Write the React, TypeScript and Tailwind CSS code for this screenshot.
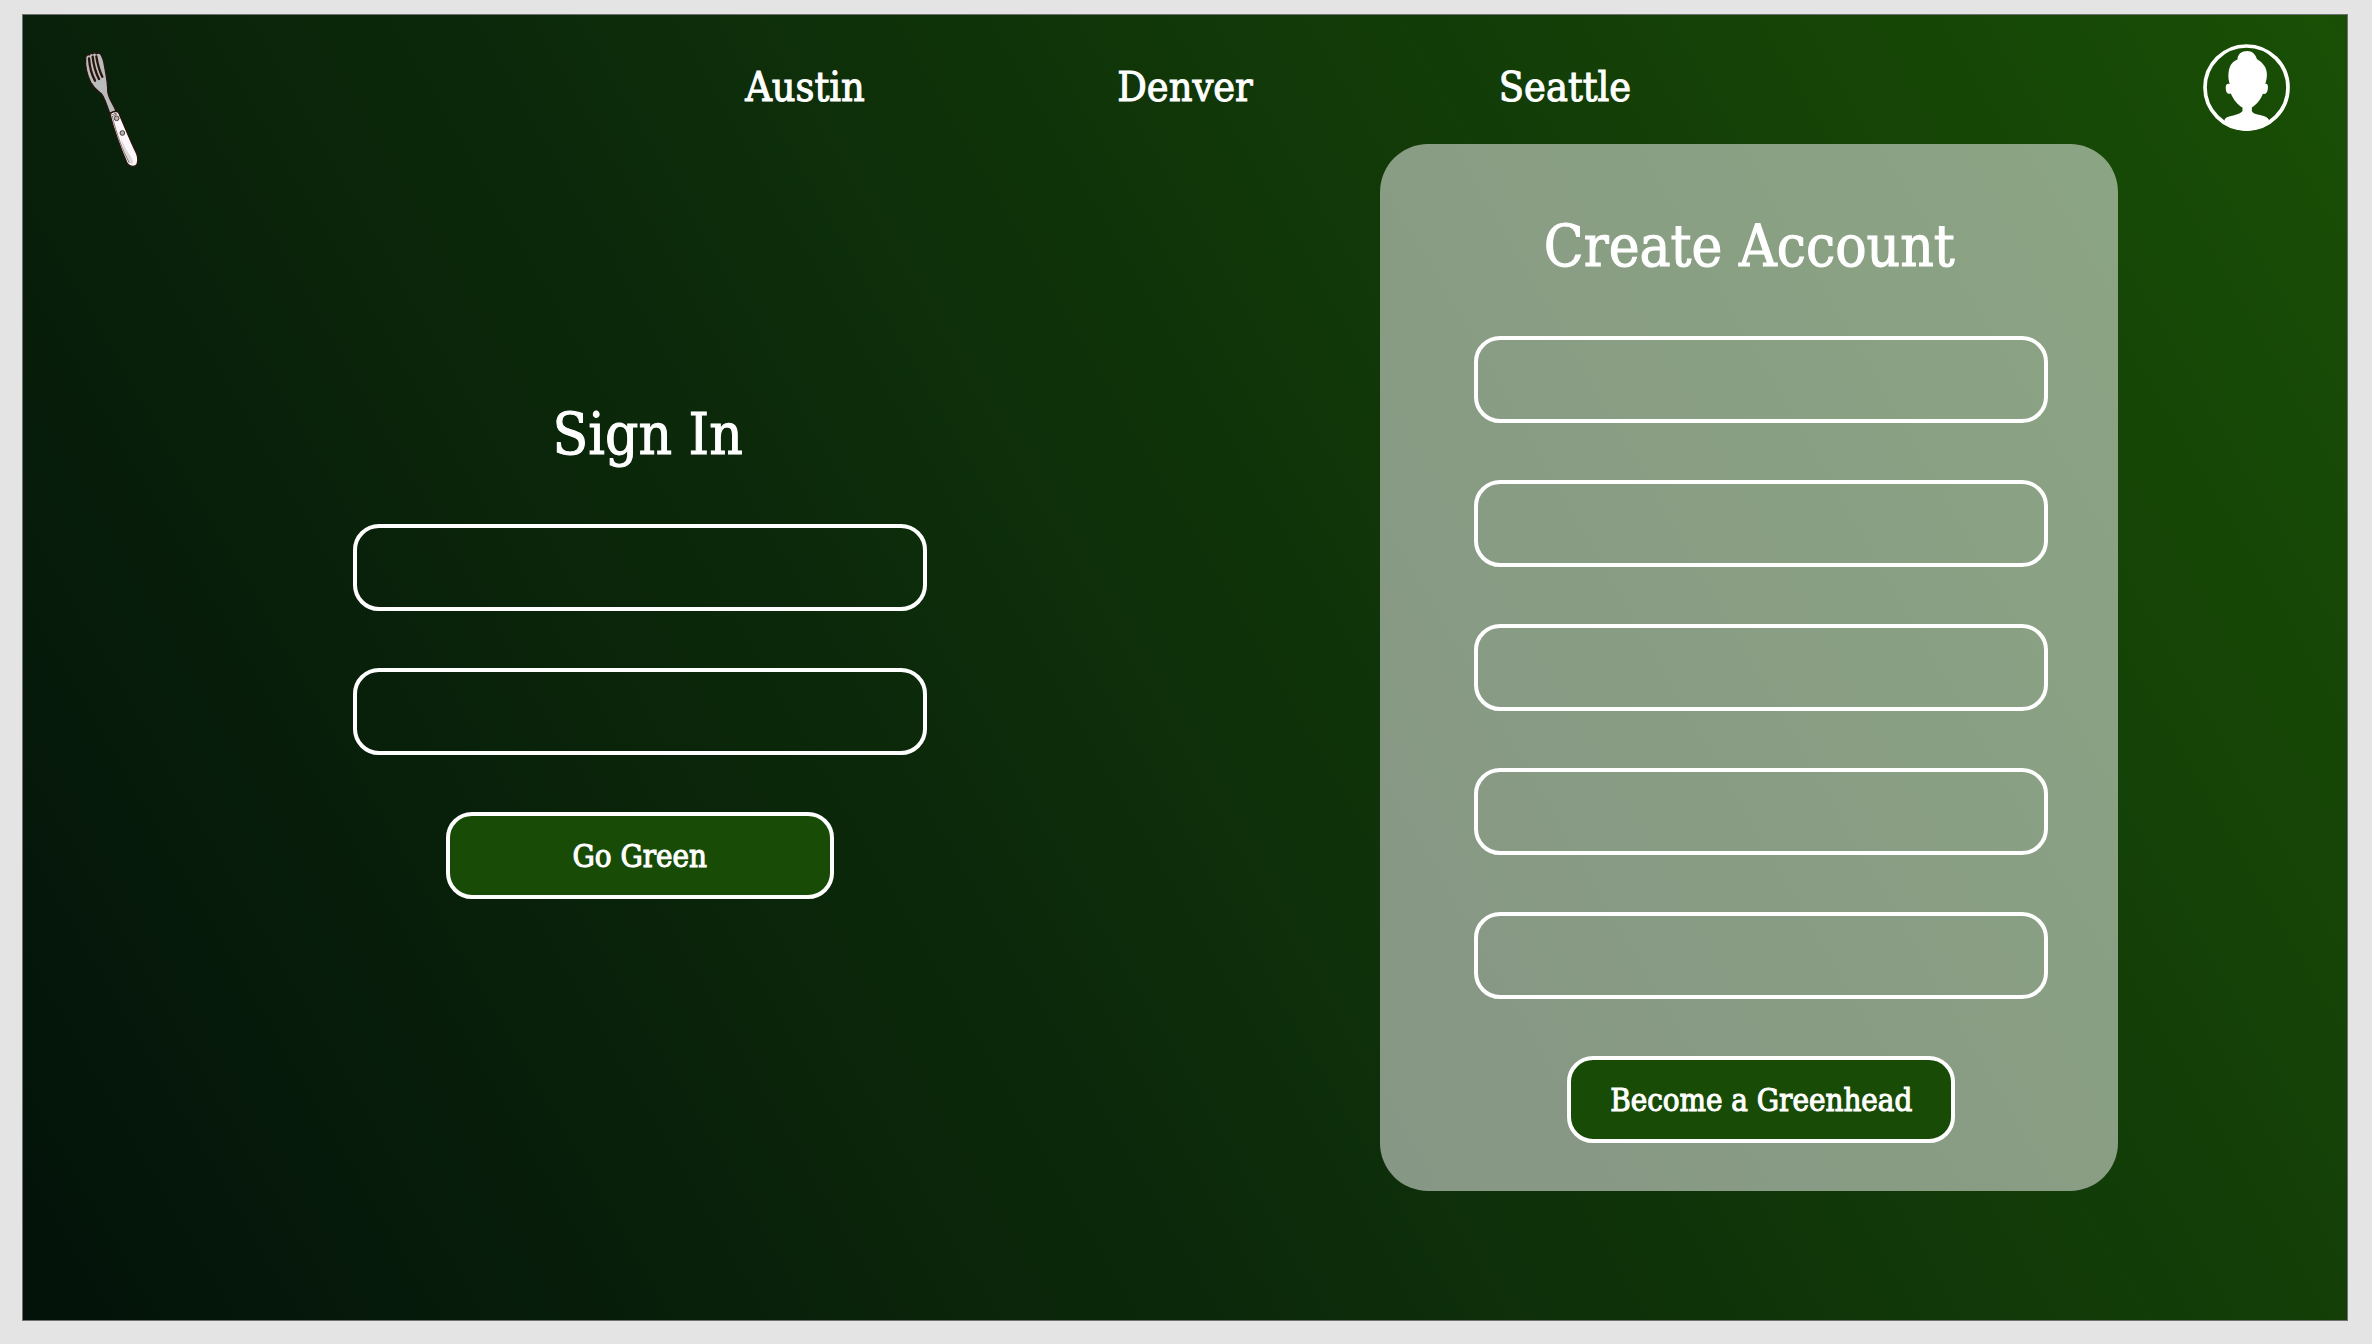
function ForkLogo() {
  return (
    <svg viewBox="0 0 240 405" className="h-[135px] w-20" role="img" aria-label="Fork logo">
      <g stroke="#2a150c" strokeWidth="4" strokeLinejoin="round" strokeLinecap="round">
        <path
          fill="#b9bcbd"
          d="M47 52C45 75 52 106 62 127C72 146 84 153 94 161C103 172 107 184 119 220L138 213C129 190 115 176 113 152C114 128 107 98 101 64C97 50 92 39 86 39C82 39 80 40 79 42C76 37 70 37 68 42C66 39 61 39 58 45C53 43 48 46 47 52Z"
        />
        <path fill="none" strokeWidth="7" d="M57 55C59 82 65 104 75 122M68 50C71 78 78 100 87 117M79 49C83 74 90 96 97 110" />
        <path
          fill="#fdf7fb"
          d="M120 223C124 215 139 211 146 218C162 255 181 302 200 341C206 355 204 373 197 377C188 381 179 379 172 371C154 330 135 282 120 223Z"
        />
      </g>
      <path fill="#dcd8d5" d="M151 290C160 313 172 335 183 350C188 358 192 369 187 372C180 372 175 366 172 358C165 338 156 315 151 290Z" />
      <g fill="none" stroke="#4a3b36" strokeWidth="2">
        <path d="M127 229C139 280 158 331 178 369" />
        <path d="M122 226L141 219M134 216L137 224M124 231L142 223" />
      </g>
      <g fill="#b5b1ac" stroke="#4a4039" strokeWidth="3">
        <circle cx="140" cy="235" r="7" />
        <circle cx="157" cy="279" r="7" />
      </g>
    </svg>
  );
}

function AvatarIcon() {
  return (
    <svg viewBox="160 131 260 260" className="size-[87px]" aria-hidden="true">
      <circle cx="290" cy="261" r="124" fill="none" stroke="#fff" strokeWidth="11" />
      <path
        fill="#fff"
        d="M263 177C264 160 276 152 292 152C307 152 317 162 321 176C338 187 350 199 351 221C351 233 349 242 346 251C351 248 355 253 354 263C353 275 348 282 339 280C333 296 321 312 306 321V331C311 346 350 339 358 359C338 381 315 391 291 391C266 391 243 380 224 361C224 342 266 348 278 331V321C263 313 251 297 243 279C233 283 228 273 228 263C227 253 232 248 240 251C237 242 235 231 236 221C237 200 245 183 263 177Z"
      />
    </svg>
  );
}

function Field({ label, type = "text" }: { label: string; type?: string }) {
  return (
    <input
      type={type}
      aria-label={label}
      className="block h-[87px] w-full rounded-[26px] border-4 border-white bg-transparent px-6 text-3xl text-white outline-none focus:bg-white/10"
    />
  );
}

function SubmitButton({ children }: { children: string }) {
  return (
    <button
      type="submit"
      className="h-[87px] w-[388px] rounded-[26px] border-4 border-white bg-[#184b06] pt-0.5 text-[31px] text-white"
    >
      {children}
    </button>
  );
}

const cities = ["Austin", "Denver", "Seattle"];

const accountFields = [
  { label: "First name" },
  { label: "Last name" },
  { label: "Email", type: "email" },
  { label: "Password", type: "password" },
  { label: "Confirm password", type: "password" },
];

export default function App() {
  return (
    <div className="flex min-h-screen flex-col bg-[#e4e4e4] pt-3.5 pr-6 pb-[23px] pl-[22px] font-['DejaVu_Serif_Condensed','DejaVu_Serif',serif] text-white [-webkit-text-stroke:1px_white]">
      <div className="flex flex-1 flex-col border border-[#707070] bg-linear-[60deg] from-[#03120a] via-[#0d2d0a] via-45% to-[#194f05]">
        <header className="grid h-[129px] grid-cols-[1fr_2fr_1fr] items-start">
          <a href="#" className="mt-[25px] ml-[47px] justify-self-start">
            <ForkLogo />
          </a>
          <nav className="mt-12 grid grid-cols-3 justify-self-center text-center text-[41px] leading-12">
            {cities.map((city) => (
              <a key={city} href="#" className="w-[380px]">
                {city}
              </a>
            ))}
          </nav>
          <button type="button" aria-label="Profile" className="mt-[29px] mr-[57px] justify-self-end">
            <AvatarIcon />
          </button>
        </header>

        <main className="grid flex-1 grid-cols-[330fr_574fr_454fr_738fr_229fr] items-start">
          <section className="col-start-2 pt-[254px]">
            <h1 className="pl-4 text-center text-[58px] leading-[72px]">Sign In</h1>
            <form className="mt-[54px] flex flex-col items-center gap-[57px]">
              <Field label="Email" type="email" />
              <Field label="Password" type="password" />
              <SubmitButton>Go Green</SubmitButton>
            </form>
          </section>

          <section className="col-start-4 rounded-[48px] bg-white/50 pt-[66px] pb-12">
            <h2 className="text-center text-[58px] leading-[72px]">Create Account</h2>
            <form className="mt-[54px] flex flex-col items-center gap-[57px] pr-[70px] pl-[94px]">
              {accountFields.map((field) => (
                <Field key={field.label} {...field} />
              ))}
              <SubmitButton>Become a Greenhead</SubmitButton>
            </form>
          </section>
        </main>
      </div>
    </div>
  );
}
